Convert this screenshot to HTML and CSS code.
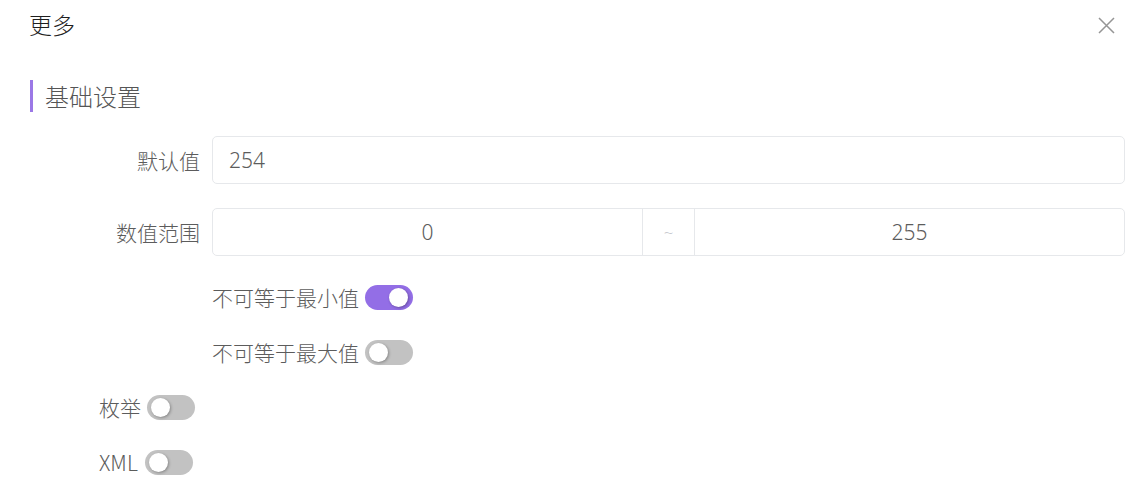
FILE: index.html
```html
<!DOCTYPE html>
<html lang="zh-CN">
<head>
<meta charset="utf-8">
<title>更多</title>
<link rel="stylesheet" href="styles.css">
</head>
<body>
<div class="dialog">
  <header class="dlg-head">
    <h2 class="dlg-title">更多</h2>
    <button class="dlg-close" aria-label="关闭">
      <svg width="17" height="17" viewBox="0 0 17 17"><path d="M1 1 L16 16 M16 1 L1 16" stroke="#959595" stroke-width="1.5" fill="none"/></svg>
    </button>
  </header>
  <section class="group">
    <h3 class="group-title">基础设置</h3>
    <div class="form-item">
      <label class="item-label">默认值</label>
      <div class="item-control">
        <div class="input"><span class="input-val">254</span></div>
      </div>
    </div>
    <div class="form-item range-item">
      <label class="item-label">数值范围</label>
      <div class="item-control">
        <div class="range">
          <div class="range-part">0</div>
          <div class="range-sep">~</div>
          <div class="range-part">255</div>
        </div>
      </div>
    </div>
    <div class="switch-row indent first">
      <span class="switch-text">不可等于最小值</span>
      <span class="switch on"><span class="knob"></span></span>
    </div>
    <div class="switch-row indent">
      <span class="switch-text">不可等于最大值</span>
      <span class="switch"><span class="knob"></span></span>
    </div>
    <div class="switch-row short">
      <span class="switch-text">枚举</span>
      <span class="switch"><span class="knob"></span></span>
    </div>
    <div class="switch-row short">
      <span class="switch-text xml">XML</span>
      <span class="switch"><span class="knob"></span></span>
    </div>
  </section>
</div>
</body>
</html>
```
FILE: styles.css
```css
* { box-sizing: border-box; }
html, body { margin: 0; padding: 0; background: #fff; }
body {
  font-family: "Noto Sans", "Noto Sans CJK SC", sans-serif;
  font-weight: 300;
  color: #5c5c5c;
  width: 1148px;
  height: 495px;
  overflow: hidden;
}
.dialog { width: 1148px; }
.dlg-head {
  display: flex;
  align-items: center;
  justify-content: space-between;
  height: 48px;
  padding: 0 33px 0 29px;
}
.dlg-title {
  margin: 0;
  font-size: 23px;
  font-weight: 300;
  color: #1f1f1f;
  line-height: 48px;
  font-family: "Noto Sans CJK SC", sans-serif;
}
.dlg-close {
  border: 0;
  background: none;
  padding: 0;
  width: 17px;
  height: 17px;
  display: flex;
  margin-top: 3px;
}
.group { padding: 32px 23px 0 30px; }
.group-title {
  margin: 0;
  height: 32px;
  line-height: 32px;
  border-left: 3px solid #9b78e6;
  padding-left: 12px;
  font-size: 24px;
  font-weight: 300;
  color: #555;
  font-family: "Noto Sans CJK SC", sans-serif;
}
.form-item {
  display: flex;
  align-items: center;
  margin-top: 24px;
  height: 48px;
}
.item-label {
  width: 182px;
  flex: none;
  text-align: right;
  padding-right: 12px;
  font-size: 21px;
  font-family: "Noto Sans CJK SC", sans-serif;
  color: #5c5c5c;
}
.item-control { flex: 1; height: 48px; }
.input {
  height: 48px;
  border: 1px solid #e6e8eb;
  border-radius: 5px;
  padding: 0 16px;
  display: flex;
  align-items: center;
  font-size: 21px;
}
.range {
  display: flex;
  height: 48px;
  border: 1px solid #e6e8eb;
  border-radius: 5px;
  font-size: 21px;
}
.range-part {
  flex: 1;
  display: flex;
  align-items: center;
  justify-content: center;
}
.range-sep {
  width: 53px;
  flex: none;
  border-left: 1px solid #e6e8eb;
  border-right: 1px solid #e6e8eb;
  display: flex;
  align-items: center;
  justify-content: center;
  color: #c8cacf;
  font-size: 17px;
}
.switch-row {
  display: flex;
  align-items: center;
  height: 32px;
  margin-top: 23px;
  font-size: 21px;
  font-family: "Noto Sans CJK SC", sans-serif;
}
.switch-row.first { margin-top: 25px; }
.switch-row.indent { padding-left: 182px; }
.switch-row.short { padding-left: 69px; }
.switch-text { margin-right: 6px; }
.switch-text.xml { margin-right: 7px; }
.switch {
  position: relative;
  width: 48px;
  height: 25px;
  border-radius: 13px;
  background: #c2c2c2;
  flex: none;
}
.switch.on { background: #936ee6; }
.knob {
  position: absolute;
  top: 3px;
  left: 4px;
  width: 19px;
  height: 19px;
  border-radius: 50%;
  background: #fff;
  box-shadow: 1px 1px 3px rgba(0,0,0,0.3);
}
.switch.on .knob { left: auto; right: 5px; }
```
